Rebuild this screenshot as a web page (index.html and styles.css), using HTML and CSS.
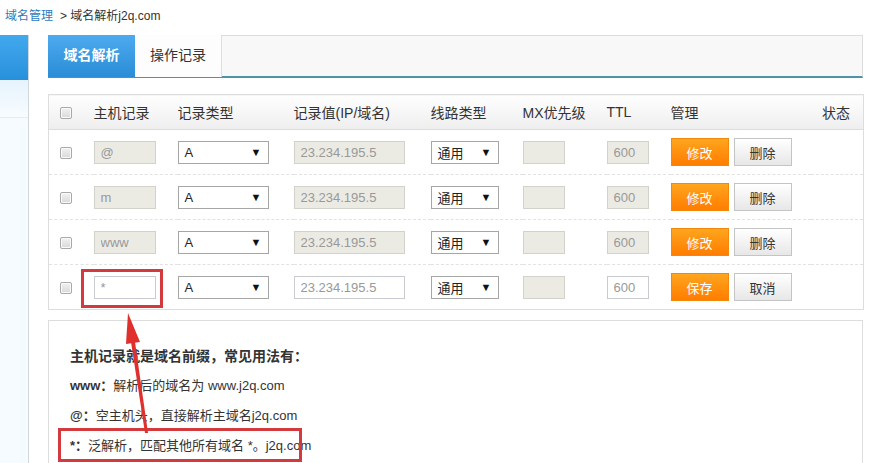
FILE: index.html
```html
<!DOCTYPE html>
<html lang="zh-CN">
<head>
    <meta charset="UTF-8">
    <meta name="viewport" content="width=device-width, initial-scale=1.0">
    <title>域名解析</title>
    <link rel="stylesheet" href="styles.css">
</head>
<body>
<div class="page">
    <div class="crumb"><a class="crumb-link" href="#">域名管理</a><span class="crumb-cur">&gt; 域名解析j2q.com</span></div>
    <div class="layout">
        <div class="side">
            <div class="side-top"></div>
            <div class="side-sub"></div>
        </div>
        <div class="main">
            <div class="tabs">
                <div class="tab active">域名解析</div>
                <div class="tab">操作记录</div>
            </div>
            <table class="records">
                <tr class="head">
                    <th class="c-chk"><input class="chk" type="checkbox"></th>
                    <th class="c-host">主机记录</th>
                    <th class="c-type">记录类型</th>
                    <th class="c-val">记录值(IP/域名)</th>
                    <th class="c-line">线路类型</th>
                    <th class="c-mx">MX优先级</th>
                    <th class="c-ttl">TTL</th>
                    <th class="c-op">管理</th>
                    <th class="c-st">状态</th>
                </tr>
                <tr>
                    <td class="c-chk"><input class="chk" type="checkbox"></td>
                    <td><input class="ipt ipt-host" type="text" value="@" disabled></td>
                    <td><div class="sel sel-type"><span>A</span><i>▼</i></div></td>
                    <td><input class="ipt ipt-val" type="text" value="23.234.195.5" disabled></td>
                    <td><div class="sel sel-line"><span>通用</span><i>▼</i></div></td>
                    <td><input class="ipt ipt-mx" type="text" disabled></td>
                    <td><input class="ipt ipt-ttl" type="text" value="600" disabled></td>
                    <td><button class="btn btn-main">修改</button><button class="btn btn-sub">删除</button></td>
                    <td></td>
                </tr>
                <tr>
                    <td class="c-chk"><input class="chk" type="checkbox"></td>
                    <td><input class="ipt ipt-host" type="text" value="m" disabled></td>
                    <td><div class="sel sel-type"><span>A</span><i>▼</i></div></td>
                    <td><input class="ipt ipt-val" type="text" value="23.234.195.5" disabled></td>
                    <td><div class="sel sel-line"><span>通用</span><i>▼</i></div></td>
                    <td><input class="ipt ipt-mx" type="text" disabled></td>
                    <td><input class="ipt ipt-ttl" type="text" value="600" disabled></td>
                    <td><button class="btn btn-main">修改</button><button class="btn btn-sub">删除</button></td>
                    <td></td>
                </tr>
                <tr>
                    <td class="c-chk"><input class="chk" type="checkbox"></td>
                    <td><input class="ipt ipt-host" type="text" value="www" disabled></td>
                    <td><div class="sel sel-type"><span>A</span><i>▼</i></div></td>
                    <td><input class="ipt ipt-val" type="text" value="23.234.195.5" disabled></td>
                    <td><div class="sel sel-line"><span>通用</span><i>▼</i></div></td>
                    <td><input class="ipt ipt-mx" type="text" disabled></td>
                    <td><input class="ipt ipt-ttl" type="text" value="600" disabled></td>
                    <td><button class="btn btn-main">修改</button><button class="btn btn-sub">删除</button></td>
                    <td></td>
                </tr>
                <tr class="last">
                    <td class="c-chk"><input class="chk" type="checkbox"></td>
                    <td><input class="ipt ipt-host on" type="text" value="*"></td>
                    <td><div class="sel sel-type"><span>A</span><i>▼</i></div></td>
                    <td><input class="ipt ipt-val on" type="text" value="23.234.195.5"></td>
                    <td><div class="sel sel-line"><span>通用</span><i>▼</i></div></td>
                    <td><input class="ipt ipt-mx" type="text" disabled></td>
                    <td><input class="ipt ipt-ttl on" type="text" value="600"></td>
                    <td><button class="btn btn-main">保存</button><button class="btn btn-sub">取消</button></td>
                    <td></td>
                </tr>
            </table>
            <div class="tips">
                <p class="tips-title">主机记录就是域名前缀，常见用法有：</p>
                <p><b>www：</b>解析后的域名为 www.j2q.com</p>
                <p><b>@：</b>空主机头，直接解析主域名j2q.com</p>
                <p><b>*：</b>泛解析，匹配其他所有域名 *。j2q.com</p>
            </div>
        </div>
    </div>

    <!-- 标注 -->
    <div class="mark mark-host"></div>
    <div class="mark mark-tip"></div>
    <svg class="arrow" width="872" height="463" viewBox="0 0 872 463">
        <polygon points="128,313 140,342 126,344" fill="#e0302e"/>
        <polygon points="131,342 135,342 148,433 145,433" fill="#e0302e"/>
    </svg>
</div>
</body>
</html>
```

FILE: styles.css
```css
*{margin:0;padding:0;box-sizing:border-box;}
body{font-family:"Liberation Sans","Noto Sans CJK SC",sans-serif;color:#333;background:#fff;}
.page{position:relative;width:872px;height:463px;overflow:hidden;}

.crumb{height:35px;line-height:32px;font-size:12px;padding-left:5px;}
.crumb-link{color:#2b7cc0;text-decoration:none;}
.crumb-cur{margin-left:7px;color:#333;}

.layout{display:flex;align-items:stretch;}
.side{width:29px;background:#f6fbff;border-right:1px solid #cfd6dc;min-height:430px;}
.side-top{height:45px;background:linear-gradient(#43a9ee,#2890db);}
.side-sub{height:38px;background:linear-gradient(#e6f3fc,#f8fcff);border-bottom:1px solid #e3eef6;}

.main{width:815px;margin-left:19px;}

.tabs{display:flex;height:43px;background:#f9f8f8;border:1px solid #ddd;border-left:none;border-bottom:2px solid #4e93a6;}
.tab{width:87px;line-height:41px;font-size:14px;text-align:center;color:#333;background:#fdfdfd;border-right:1px solid #ddd;margin-top:-1px;height:42px;}
.tab.active{width:87px;color:#fff;font-weight:bold;background:linear-gradient(#4daaef,#2a8dd7);border-right:none;}

.records{width:815px;margin-top:16px;border-collapse:collapse;table-layout:fixed;border:1px solid #ddd;font-size:13px;}
.records th,.records td{padding:0;text-align:left;vertical-align:middle;}
.records th{height:35px;font-size:14px;font-weight:normal;color:#333;background:linear-gradient(#fefefe,#eeeeee);border-bottom:1px solid #ddd;}
.records td{height:45px;border-bottom:1px dashed #e2e2e2;}
.records tr.last td{border-bottom:1px solid #ddd;}
.c-chk{width:45px;padding-left:11px !important;}
.chk{appearance:none;-webkit-appearance:none;display:inline-block;width:12px;height:12px;margin:0;vertical-align:middle;border:1px solid #a9a9a9;border-radius:2px;background:linear-gradient(#f2f2f2,#d9d9d9);box-shadow:inset 0 0 0 1px #fafafa;}
.c-host{width:84px;}
.c-type{width:116px;}
.c-val{width:137px;}
.c-line{width:92px;}
.c-mx{width:84px;}
.c-ttl{width:64px;}
.c-op{width:140px;}
.c-st{width:53px;text-align:right !important;padding-right:13px !important;}

.ipt{height:23px;border:1px solid #d2d2cb;background:#ebebe4;color:#999;font-size:13px;font-family:inherit;padding:0 6px;vertical-align:middle;}
.ipt.on{background:#fff;border-color:#c8ccd2;}
.ipt-host{width:62px;}
.ipt-val{width:111px;}
.ipt-mx{width:42px;}
.ipt-ttl{width:42px;}

.sel{display:flex;justify-content:space-between;align-items:center;height:23px;border:1px solid #a6a6a6;background:#fff;color:#222;font-size:13px;padding:0 6px;}
.sel i{font-style:normal;font-size:11px;color:#111;}
.sel-type{width:91px;}
.sel-line{width:68px;}

.btn{width:58px;height:28px;font-size:13px;font-family:inherit;cursor:pointer;vertical-align:middle;}
.btn-main{color:#fff;background:linear-gradient(#ffa51e,#ff7d00);border:1px solid #f4880c;}
.btn-sub{margin-left:5px;color:#333;background:linear-gradient(#ffffff,#e7e7e7);border:1px solid #c4c4c4;}

.tips{margin-top:10px;border:1px solid #ddd;border-bottom:none;height:200px;padding:20px 0 0 21px;font-size:13px;}
.tips p{line-height:30px;}
.tips-title{font-size:14px;font-weight:bold;}

.mark{position:absolute;border:3px solid #d23a3e;}
.mark-host{left:81px;top:269px;width:82px;height:39px;}
.mark-tip{left:58px;top:428px;width:244px;height:34px;}
.arrow{position:absolute;left:0;top:0;pointer-events:none;}
```
